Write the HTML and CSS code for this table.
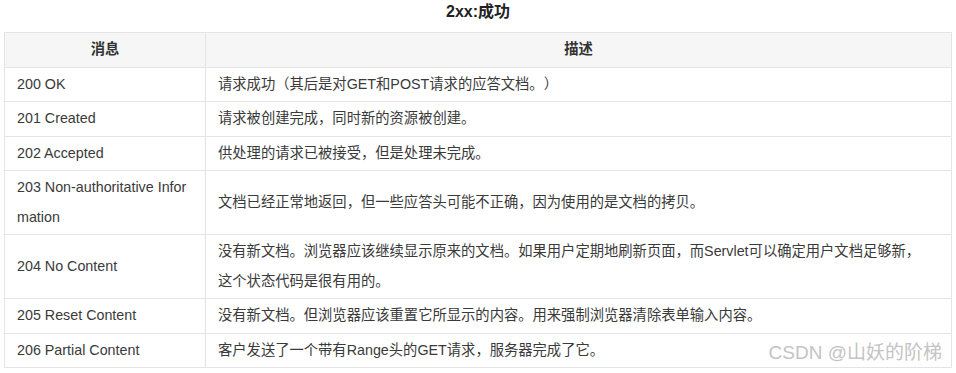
FILE: index.html
```html
<!DOCTYPE html>
<html lang="zh-CN">
<head>
<meta charset="utf-8">
<title>2xx:成功</title>
<link rel="stylesheet" href="styles.css">
</head>
<body>
<div class="page">
  <h3 class="title">2xx:成功</h3>
  <table class="status-table">
    <colgroup>
      <col class="col-msg">
      <col class="col-desc">
    </colgroup>
    <thead>
      <tr><th>消息</th><th>描述</th></tr>
    </thead>
    <tbody>
      <tr><td>200 OK</td><td>请求成功（其后是对GET和POST请求的应答文档。）</td></tr>
      <tr><td>201 Created</td><td>请求被创建完成，同时新的资源被创建。</td></tr>
      <tr><td>202 Accepted</td><td>供处理的请求已被接受，但是处理未完成。</td></tr>
      <tr><td>203 Non-authoritative Information</td><td>文档已经正常地返回，但一些应答头可能不正确，因为使用的是文档的拷贝。</td></tr>
      <tr><td>204 No Content</td><td>没有新文档。浏览器应该继续显示原来的文档。如果用户定期地刷新页面，而Servlet可以确定用户文档足够新，<br>这个状态代码是很有用的。</td></tr>
      <tr><td>205 Reset Content</td><td>没有新文档。但浏览器应该重置它所显示的内容。用来强制浏览器清除表单输入内容。</td></tr>
      <tr><td>206 Partial Content</td><td>客户发送了一个带有Range头的GET请求，服务器完成了它。</td></tr>
    </tbody>
  </table>
  <div class="watermark">CSDN @山妖的阶梯</div>
</div>
</body>
</html>
```

FILE: styles.css
```css
html, body {
  margin: 0;
  padding: 0;
  background: #ffffff;
}

.page {
  position: relative;
  padding: 0 4px;
  font-family: "Liberation Sans", Arial, "Noto Sans CJK SC", sans-serif;
  color: #333333;
  font-size: 14px;
  text-spacing-trim: space-all;
}

.title {
  margin: 0;
  height: 32px;
  line-height: 24px;
  font-size: 16px;
  font-weight: bold;
  text-align: center;
  color: #222222;
}

.status-table {
  width: 948px;
  border-collapse: collapse;
  table-layout: fixed;
}

.col-msg {
  width: 201px;
}

.status-table th,
.status-table td {
  border: 1px solid #e4e4e4;
  padding: 2px 12px;
  line-height: 29.5px;
  text-align: left;
  vertical-align: middle;
  word-break: break-all;
  font-size: 14.3px;
  text-spacing-trim: space-all;
}

.status-table th {
  background: #f6f6f6;
  font-weight: bold;
  text-align: center;
  color: #333333;
}

.status-table td {
  color: #3a3a3a;
}

.watermark {
  position: absolute;
  right: 14px;
  top: 340px;
  font-size: 19px;
  line-height: 26px;
  color: #c4c4c4;
  white-space: nowrap;
}
```
